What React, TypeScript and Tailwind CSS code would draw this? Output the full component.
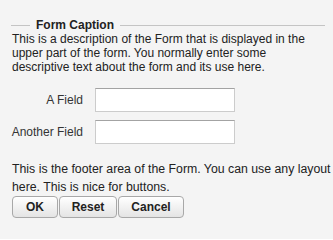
import React from "react";

export default function App() {
  const btn =
    "h-[22px] rounded-[4px] border border-[#a8a8a8] bg-gradient-to-b from-white to-[#e4e4e4] text-[12px] font-bold text-[#222] shadow-[inset_0_1px_0_#ffffff]";
  return (
    <div className="w-[333px] h-[239px] bg-[#f4f4f4] text-[#222] font-['Liberation_Sans',Arial,sans-serif] overflow-hidden">
      <div className="pt-[18px] pl-[11px] pr-[8px]">
        <div className="flex items-center h-[14px]">
          <div className="w-[19px] h-px bg-[#c4c4c4]" />
          <span className="px-[6px] text-[12px] font-bold leading-[14px]">Form Caption</span>
          <div className="flex-1 h-px bg-[#c4c4c4]" />
        </div>
        <p className="pl-px text-[12px] leading-[14px]">
          This is a description of the Form that is displayed in the upper part of the form. You normally enter some descriptive text about the form and its use here.
        </p>
        <div className="mt-[14px] flex flex-col gap-[8px] pl-px">
          <div className="flex items-center">
            <div className="w-[71px] flex justify-end">
              <label className="whitespace-nowrap text-[12px] text-[#333]">A Field</label>
            </div>
            <input className="ml-[12px] w-[140px] h-[24px] bg-white border border-[#cccccc] border-t-[#a3a3a3] outline-none" />
          </div>
          <div className="flex items-center">
            <div className="w-[71px] flex justify-end">
              <label className="whitespace-nowrap text-[12px] text-[#333]">Another Field</label>
            </div>
            <input className="ml-[12px] w-[140px] h-[24px] bg-white border border-[#cccccc] border-t-[#a3a3a3] outline-none" />
          </div>
        </div>
        <p className="mt-[16px] pl-px text-[12.3px] leading-[18px] whitespace-nowrap">
          This is the footer area of the Form. You can use any layout
          <br />
          here. This is nice for buttons.
        </p>
        <div className="flex pl-px">
          <button className={`w-[46px] ${btn}`}>OK</button>
          <button className={`ml-[1px] w-[58px] ${btn}`}>Reset</button>
          <button className={`ml-[1px] w-[66px] ${btn}`}>Cancel</button>
        </div>
      </div>
    </div>
  );
}
